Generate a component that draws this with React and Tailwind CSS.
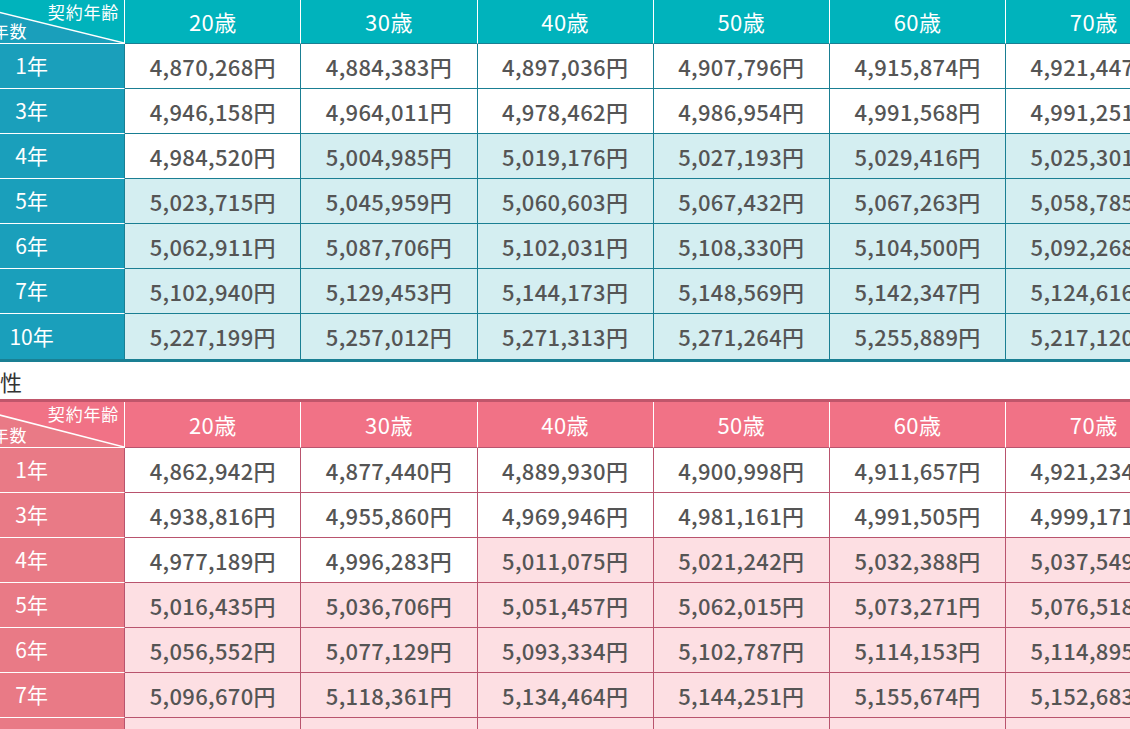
import React from "react";

const AGES = ["20歳", "30歳", "40歳", "50歳", "60歳", "70歳"];

// tint = index of the first shaded column in that row (6 = none)
const male = [
  { term: "1年", tint: 6, values: ["4,870,268", "4,884,383", "4,897,036", "4,907,796", "4,915,874", "4,921,447"] },
  { term: "3年", tint: 6, values: ["4,946,158", "4,964,011", "4,978,462", "4,986,954", "4,991,568", "4,991,251"] },
  { term: "4年", tint: 1, values: ["4,984,520", "5,004,985", "5,019,176", "5,027,193", "5,029,416", "5,025,301"] },
  { term: "5年", tint: 0, values: ["5,023,715", "5,045,959", "5,060,603", "5,067,432", "5,067,263", "5,058,785"] },
  { term: "6年", tint: 0, values: ["5,062,911", "5,087,706", "5,102,031", "5,108,330", "5,104,500", "5,092,268"] },
  { term: "7年", tint: 0, values: ["5,102,940", "5,129,453", "5,144,173", "5,148,569", "5,142,347", "5,124,616"] },
  { term: "10年", tint: 0, values: ["5,227,199", "5,257,012", "5,271,313", "5,271,264", "5,255,889", "5,217,120"] },
];

const female = [
  { term: "1年", tint: 6, values: ["4,862,942", "4,877,440", "4,889,930", "4,900,998", "4,911,657", "4,921,234"] },
  { term: "3年", tint: 6, values: ["4,938,816", "4,955,860", "4,969,946", "4,981,161", "4,991,505", "4,999,171"] },
  { term: "4年", tint: 2, values: ["4,977,189", "4,996,283", "5,011,075", "5,021,242", "5,032,388", "5,037,549"] },
  { term: "5年", tint: 0, values: ["5,016,435", "5,036,706", "5,051,457", "5,062,015", "5,073,271", "5,076,518"] },
  { term: "6年", tint: 0, values: ["5,056,552", "5,077,129", "5,093,334", "5,102,787", "5,114,153", "5,114,895"] },
  { term: "7年", tint: 0, values: ["5,096,670", "5,118,361", "5,134,464", "5,144,251", "5,155,674", "5,152,683"] },
  { term: "10年", tint: 0, values: ["5,218,105", "5,245,370", "5,261,552", "5,268,911", "5,270,036", "5,251,844"] },
];

// colour sets per table
const themes = {
  blue: {
    top: "border-t-[3px] border-t-[#1a7f93]",
    bottom: "border-b-[3px] border-b-[#1a7f93]",
    headRow: "h-[44px]",
    head: "bg-[#00b3bc]",
    headHex: "#00b3bc",
    side: "bg-[#1a9fbb]",
    tint: "bg-[#d4eef1]",
    line: "border-[#1a7f93]",
  },
  pink: {
    top: "border-t-[3px] border-t-[#c0566b]",
    bottom: "border-b-[3px] border-b-[#c0566b]",
    headRow: "h-[46px]",
    head: "bg-[#f17286]",
    headHex: "#f17286",
    side: "bg-[#e97a86]",
    tint: "bg-[#fddfe3]",
    line: "border-[#b9546e]",
  },
};

const PriceTable = ({ rows, theme }) => {
  const t = themes[theme];
  return (
    <div className={`w-max ${t.top} ${t.bottom}`}>
      {/* header */}
      <div className={`flex ${t.headRow}`}>
        <div className={`relative w-[176.2px] shrink-0 ${t.side} border-r border-b border-white`}>
          <svg className="absolute inset-0 w-full h-full" viewBox="0 0 175 43" preserveAspectRatio="none">
            <polygon points="0,0 175,0 175,43" fill={t.headHex} />
            <line x1="0" y1="0" x2="175" y2="43" stroke="#fff" strokeWidth="1.5" />
          </svg>
          <span className="absolute right-[5px] top-[3px] text-[17px] leading-none tracking-[0.05em] text-white">
            契約年齢
          </span>
          <span className="absolute left-[7px] bottom-[4px] text-[17px] leading-none tracking-[0.05em] text-white">
            契約年数
          </span>
        </div>
        {AGES.map((age) => (
          <div
            key={age}
            className={`w-[176.2px] shrink-0 flex items-center justify-center ${t.head} border-r border-b ${t.line} border-r-white text-[22px] text-white tracking-[0.02em]`}
          >
            {age}
          </div>
        ))}
      </div>

      {rows.map((row, ri) => (
        <div key={row.term} className="flex h-[45px]">
          <div
            className={`w-[176.2px] shrink-0 flex items-center justify-center pr-[10px] ${t.side} border-r ${t.line} ${
              ri < rows.length - 1 ? "border-b border-b-white" : ""
            } text-[21px] text-white`}
          >
            {row.term}
          </div>
          {row.values.map((v, ci) => {
            const tinted = ci >= row.tint;
            return (
              <div
                key={ci}
                className={`w-[176.2px] shrink-0 flex items-center justify-center border-r ${t.line} ${
                  ri < rows.length - 1 ? "border-b" : ""
                } ${tinted ? t.tint : "bg-white"} text-[22px] font-medium text-[#555555] tracking-[0.015em]`}
              >
                {v}円
              </div>
            );
          })}
        </div>
      ))}
    </div>
  );
};

const App = () => {
  return (
    <div
      className="w-[1130px] h-[729px] overflow-hidden bg-white"
      style={{ fontFamily: '"Noto Sans CJK JP", "Noto Sans", sans-serif' }}
    >
      <div className="-ml-[51px] -mt-[3px]">
        <PriceTable rows={male} theme="blue" />
        <div className="h-[37px] flex items-center pl-[29px] pt-[2px] text-[22px] text-[#333333]">女性</div>
        <PriceTable rows={female} theme="pink" />
      </div>
    </div>
  );
};

export default App;
